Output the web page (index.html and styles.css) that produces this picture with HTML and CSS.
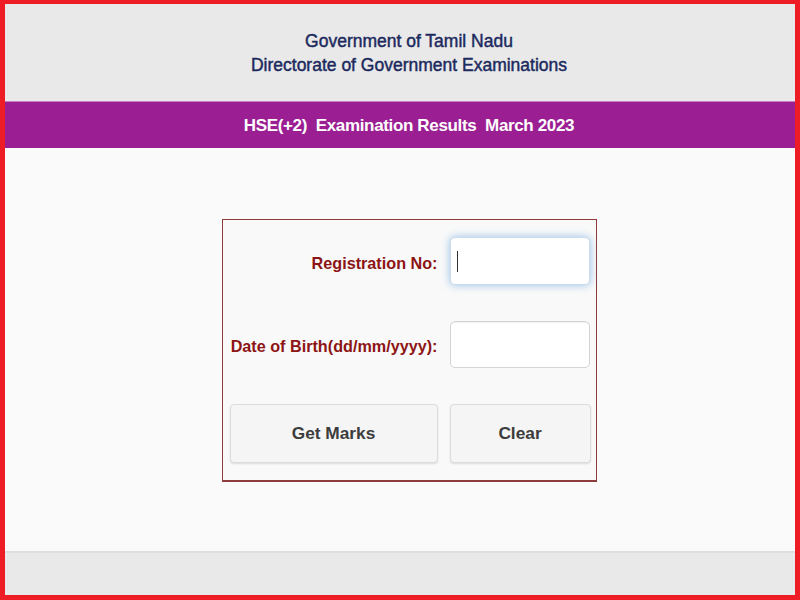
FILE: index.html
```html
<!DOCTYPE html>
<html lang="en">
<head>
    <meta charset="UTF-8">
    <meta name="viewport" content="width=device-width, initial-scale=1.0">
    <title>HSE(+2) Examination Results March 2023</title>
    <link rel="stylesheet" href="styles.css">
</head>
<body>
    <div class="frame">
        <div class="header">
            <div class="header-text">
                <div>Government of Tamil Nadu</div>
                <div>Directorate of Government Examinations</div>
            </div>
        </div>

        <div class="title-bar">
            <span class="title-text">HSE(+2)  Examination Results  March 2023</span>
        </div>

        <div class="main">
            <form class="result-form" onsubmit="return false;">
                <label class="field-label" for="regno">Registration No:</label>
                <div class="input-wrap">
                    <input type="text" id="regno" class="field-input focused">
                    <span class="caret"></span>
                </div>

                <label class="field-label" for="dob">Date of Birth(dd/mm/yyyy):</label>
                <div class="input-wrap">
                    <input type="text" id="dob" class="field-input">
                </div>

                <button type="submit" class="btn">Get Marks</button>
                <button type="reset" class="btn">Clear</button>
            </form>
        </div>

        <div class="footer"></div>
    </div>
</body>
</html>
```

FILE: styles.css
```css
html, body {
    margin: 0;
    padding: 0;
}

body {
    font-family: "Liberation Sans", Arial, sans-serif;
    background: #ee1c25;
}

.frame {
    box-sizing: border-box;
    width: 800px;
    height: 600px;
    border-style: solid;
    border-color: #ee1c25;
    border-width: 4px 5px 5px 5px;
    display: flex;
    flex-direction: column;
    background: #fafafa;
}

.header {
    height: 97px;
    background: #e9e9e9;
    display: flex;
    align-items: center;
    justify-content: center;
    padding-left: 18px;
    padding-top: 1px;
    box-sizing: border-box;
}

.header-text {
    text-align: center;
    color: #1c2a5e;
    font-size: 17.5px;
    line-height: 24px;
    -webkit-text-stroke: 0.45px #1c2a5e;
}

.title-bar {
    height: 47px;
    border-top: 1px solid #c77fc2;
    background: #9b1f93;
    display: flex;
    align-items: center;
    justify-content: center;
    padding-left: 18px;
    padding-top: 2px;
    box-sizing: border-box;
}

.title-text {
    white-space: pre;
    color: #fff;
    font-weight: bold;
    font-size: 17px;
    letter-spacing: -0.35px;
}

.main {
    flex: 1;
    background: #fafafa;
    padding-top: 71px;
    padding-left: 18px;
    display: flex;
    justify-content: center;
    align-items: flex-start;
}

.result-form {
    display: grid;
    grid-template-columns: 208px 140px;
    grid-template-rows: 48px 47px 59px;
    column-gap: 12px;
    row-gap: 36px;
    padding: 17px 6px 17px 7px;
    border: 1px solid #8e3b3b;
    border-bottom-width: 2px;
    background: #f9f9f9;
}

.field-label {
    display: flex;
    align-items: center;
    justify-content: flex-end;
    white-space: nowrap;
    padding-top: 4px;
    color: #8c1414;
    font-weight: bold;
    font-size: 16.2px;
}

.input-wrap {
    position: relative;
}

.field-input {
    box-sizing: border-box;
    width: 100%;
    height: 100%;
    margin: 0;
    border: 1px solid #d4d4d4;
    border-radius: 5px;
    background: #fff;
    font-size: 16px;
    padding: 0 8px;
    outline: none;
    box-shadow: inset 0 1px 1px rgba(0, 0, 0, 0.06);
}

.field-input.focused {
    border-color: #c9dced;
    box-shadow: 0 0 8px rgba(102, 160, 220, 0.65);
}

.caret {
    position: absolute;
    left: 7px;
    top: 14px;
    width: 1px;
    height: 21px;
    background: #333;
}

.btn {
    box-sizing: border-box;
    margin: 0;
    border: 1px solid #dcdcdc;
    border-radius: 4px;
    background: #f5f5f5;
    box-shadow: 0 1px 2px rgba(0, 0, 0, 0.12);
    color: #3c3c3c;
    font-family: "Liberation Sans", Arial, sans-serif;
    font-weight: bold;
    font-size: 17.3px;
    cursor: pointer;
}

.btn:last-child {
    width: 141px;
}

.footer {
    height: 42px;
    border-top: 2px solid #dedede;
    background: #e9e9e9;
}
```
